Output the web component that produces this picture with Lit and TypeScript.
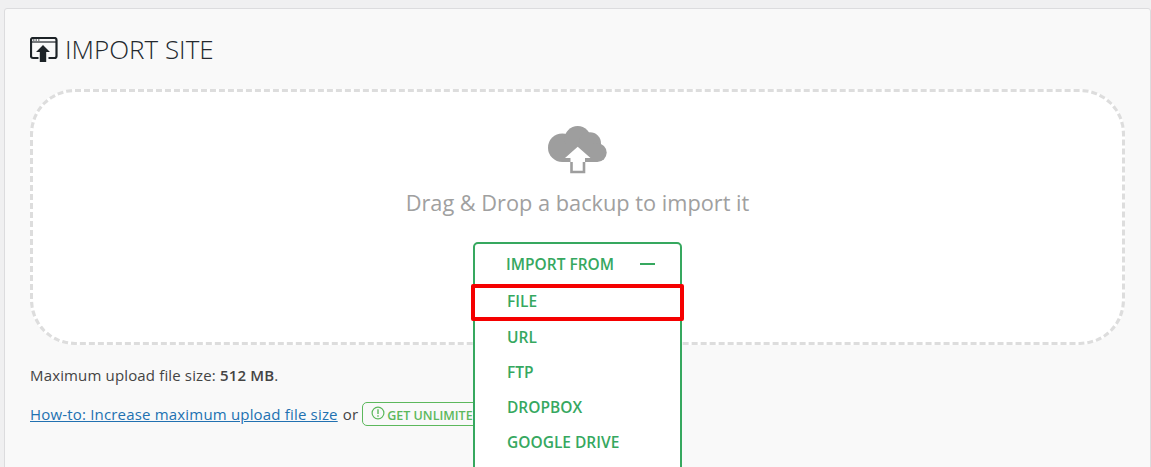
import { LitElement, html, css } from "lit";
import { customElement } from "lit/decorators.js";

@customElement("app-root")
export class AppRoot extends LitElement {
  static styles = css`
    :host {
      display: block;
      height: 467px;
      overflow: hidden;
      background: #f0f0f1;
      font-family: "Open Sans", "Noto Sans", sans-serif;
      padding: 8px 0 0 4px;
      box-sizing: border-box;
    }
    .card {
      background: #f9f9f9;
      border: 1px solid #dcdcde;
      border-radius: 3px;
      height: 470px;
      box-sizing: border-box;
      padding: 20px 25px 0 25px;
    }
    h1 {
      margin: 0;
      display: flex;
      align-items: center;
      gap: 7px;
      height: 40px;
      font-size: 26px;
      font-weight: 300;
      color: #23282d;
    }
    h1 svg { display: block; margin-top: 2px; }
    .drop {
      margin-top: 20px;
      height: 256px;
      box-sizing: border-box;
      background: #fff;
      border: 3px dashed #dddddd;
      border-radius: 45px;
      display: flex;
      flex-direction: column;
      align-items: center;
      padding-top: 34px;
      position: relative;
    }
    .drop svg { display: block; }
    .hint {
      margin-top: 13px;
      height: 32px;
      line-height: 32px;
      font-size: 21.75px;
      color: #a0a0a0;
    }
    .importer {
      position: absolute;
      top: 150px;
      left: 440px;
      width: 209px;
      box-sizing: border-box;
      background: #fff;
      border: 2px solid #36a85f;
      border-radius: 5px 5px 0 0;
      color: #36a85f;
      font-weight: 600;
      font-size: 15.5px;
      height: 260px;
    }
    .head {
      height: 41px;
      display: flex;
      align-items: center;
      justify-content: space-between;
      padding: 0 25px 0 31px;
      border-bottom: 1px solid #a8b8a0;
      box-sizing: border-box;
    }
    .dash {
      width: 15px;
      height: 2px;
      background: #36a85f;
    }
    .item {
      height: 35px;
      line-height: 35px;
      padding-left: 32px;
      position: relative;
    }
    .item.first { line-height: 33px; }
    .mark {
      position: absolute;
      left: -4px;
      right: -4px;
      top: -1px;
      bottom: -1px;
      border: 4px solid #f50000;
      border-radius: 2px;
    }
    .info {
      margin: 20px 0 0;
      font-size: 15px;
      letter-spacing: 0.15px;
      line-height: 20px;
      color: #444;
    }
    .info b { font-weight: 600; }
    .links {
      margin: 17px 0 0;
      display: flex;
      align-items: center;
      font-size: 15px;
      letter-spacing: 0.18px;
      height: 24px;
      color: #444;
    }
    a {
      color: #2271b1;
      text-decoration: underline;
    }
    .or { margin: 0 4px 0 5px; }
    .pill {
      display: inline-flex;
      align-items: center;
      gap: 2px;
      height: 24px;
      box-sizing: border-box;
      padding: 0 8px;
      border: 1px solid #5cb85c;
      border-radius: 5px;
      color: #5cb85c;
      font-size: 12.5px;
      letter-spacing: 0;
      font-weight: 600;
      white-space: nowrap;
    }
    .pill svg { margin-top: -2px; }
    .pill span { margin-top: 2px; }
  `;

  render() {
    return html`
      <div class="card">
        <h1>
          <svg width="28" height="26" viewBox="0 0 28 26">
            <path d="M8.500 21H3a2 2 0 0 1-2-2V3a2 2 0 0 1 2-2h21.500a2 2 0 0 1 2 2v16a2 2 0 0 1-2 2H18.500" fill="none" stroke="#1d2327" stroke-width="2.200"/>
            <path d="M1 5h25" stroke="#1d2327" stroke-width="1.200"/>
            <path d="M3 3h1.500M5.500 3H7M8 3h1.500" stroke="#1d2327" stroke-width="1"/>
            <path d="M13 8 20 15H16.200V25H9.800V15H6z" fill="#1d2327"/>
          </svg>
          IMPORT SITE
        </h1>
        <div class="drop">
          <svg width="60" height="48" viewBox="0 0 60 48">
            <g fill="#9e9e9e">
              <circle cx="14.300" cy="21.700" r="14.300"/>
              <circle cx="29.700" cy="13.300" r="13.300"/>
              <circle cx="42" cy="17.300" r="11"/>
              <circle cx="49.300" cy="26.600" r="9.400"/>
              <rect x="14.300" y="18" width="35" height="18"/>
            </g>
            <path d="M29.700 20.700 42.500 32H37V47H22.500V32H17z" fill="#fff"/>
            <path d="M23.500 36V46H36V36" fill="none" stroke="#9e9e9e" stroke-width="2.600"/>
          </svg>
          <div class="hint">Drag &amp; Drop a backup to import it</div>
          <div class="importer">
            <div class="head"><span>IMPORT FROM</span><span class="dash"></span></div>
            <div class="item first">FILE<span class="mark"></span></div>
            <div class="item">URL</div>
            <div class="item">FTP</div>
            <div class="item">DROPBOX</div>
            <div class="item">GOOGLE DRIVE</div>
          </div>
        </div>
        <p class="info">Maximum upload file size: <b>512 MB</b>.</p>
        <div class="links">
          <a href="#">How-to: Increase maximum upload file size</a>
          <span class="or">or</span>
          <span class="pill">
            <svg width="14" height="14" viewBox="0 0 14 14">
              <circle cx="7" cy="7" r="5.900" fill="none" stroke="#5cb85c" stroke-width="1.200"/>
              <path d="M7 3.200v4.800M7 9.200v1.500" stroke="#5cb85c" stroke-width="1.400"/>
            </svg>
            <span>GET UNLIMITED SIZE</span>
          </span>
        </div>
      </div>
    `;
  }
}
